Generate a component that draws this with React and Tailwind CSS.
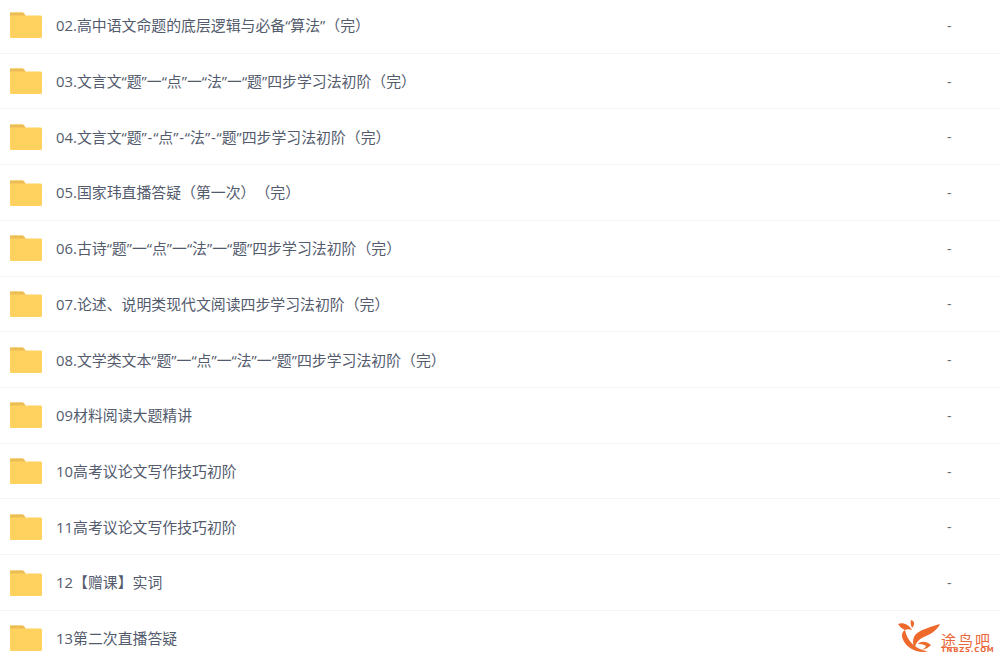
const rows = [
  "02.高中语文命题的底层逻辑与必备“算法”（完）",
  "03.文言文“题”一“点”一“法”一“题”四步学习法初阶（完）",
  "04.文言文“题”-“点”-“法”-“题”四步学习法初阶（完）",
  "05.国家玮直播答疑（第一次）（完）",
  "06.古诗“题”一“点”一“法”一“题”四步学习法初阶（完）",
  "07.论述、说明类现代文阅读四步学习法初阶（完）",
  "08.文学类文本“题”一“点”一“法”一“题”四步学习法初阶（完）",
  "09材料阅读大题精讲",
  "10高考议论文写作技巧初阶",
  "11高考议论文写作技巧初阶",
  "12【赠课】实词",
  "13第二次直播答疑",
];

function Folder() {
  return (
    <svg width="32" height="26" viewBox="0 0 32 26" className="shrink-0">
      <path d="M1 0.5H12C13 0.5 14 1 14.5 2L15.5 3.5H30.5C31.4 3.5 32 4.1 32 5V24.5C32 25.4 31.4 26 30.5 26H1.5C0.6 26 0 25.4 0 24.5V1.5C0 0.9 0.4 0.5 1 0.5Z" fill="#ffd25f" />
      <path d="M0 1.5C0 0.9 0.4 0.5 1 0.5H12C13 0.5 14 1 14.5 2L15.5 3.5H0Z" fill="#ecbd55" />
    </svg>
  );
}

function Logo() {
  return (
    <div className="absolute left-[895px] top-[618px] flex">
      <svg width="46" height="38" viewBox="0 0 46 38" className="shrink-0">
        <path d="M3 6C8 4 14 7 17 12C14 11 12 11 10 12C7 11 5 9 3 6Z" fill="#ee6a2c" />
        <path d="M16 2C20 3 20 7 17 10C16 7 15 5 16 2Z" fill="#ee6a2c" />
        <path d="M10 12C12 22 19 31 33 33.5C22 35.5 10 30 7 19C6.5 16 8 13 10 12Z" fill="#ee6a2c" />
        <path d="M45 6C38 8 27 11 21 16C17.5 20 17 26 20 30C20.5 24 25 20.5 31 18C37 15.5 42 12 45 6Z" fill="#ee6a2c" />
        <path d="M23 26C26 23 31 23 36 27C34 29 31 31 27 32C30 30 31 28.5 31 28C28 26 25 26 23 26Z" fill="#ee6a2c" />
      </svg>
      <div className="flex flex-col items-start text-[#e9673a] pt-[14px] whitespace-nowrap">
        <span className="text-[15px] leading-[15px] tracking-[2px] font-['Noto_Sans_CJK_SC',sans-serif]">途鸟吧</span>
        <span className="text-[7px] leading-[7px] tracking-[0.75px] font-bold font-['DejaVu_Sans',sans-serif]">TNBZS.COM</span>
      </div>
    </div>
  );
}

function Label({ text }) {
  const parts = text.split("-");
  return (
    <span className="ml-[14px] flex-1 text-[14.88px] text-[#535b6d] whitespace-nowrap [text-spacing-trim:space-all]">
      {parts.map((p, i) => (
        <span key={i}>
          {i > 0 && <span className="mx-[0.8px]">-</span>}
          {p}
        </span>
      ))}
    </span>
  );
}

export default function App() {
  return (
    <div className="relative w-[1000px] h-[658px] overflow-hidden bg-white font-['Open_Sans','Noto_Sans_CJK_SC',sans-serif]">
      <div className="flex flex-col mt-[-2px]">
        {rows.map((t, i) => (
          <div key={t} className="flex items-center h-[55.72px] shrink-0 border-b border-[#f5f5f6] pl-[10px]">
            <Folder />
            <Label text={t} />
            <span className="w-[10px] mr-[43px] text-[14px] text-[#666b78]">{i < rows.length - 1 ? "-" : ""}</span>
          </div>
        ))}
      </div>
      <Logo />
    </div>
  );
}
